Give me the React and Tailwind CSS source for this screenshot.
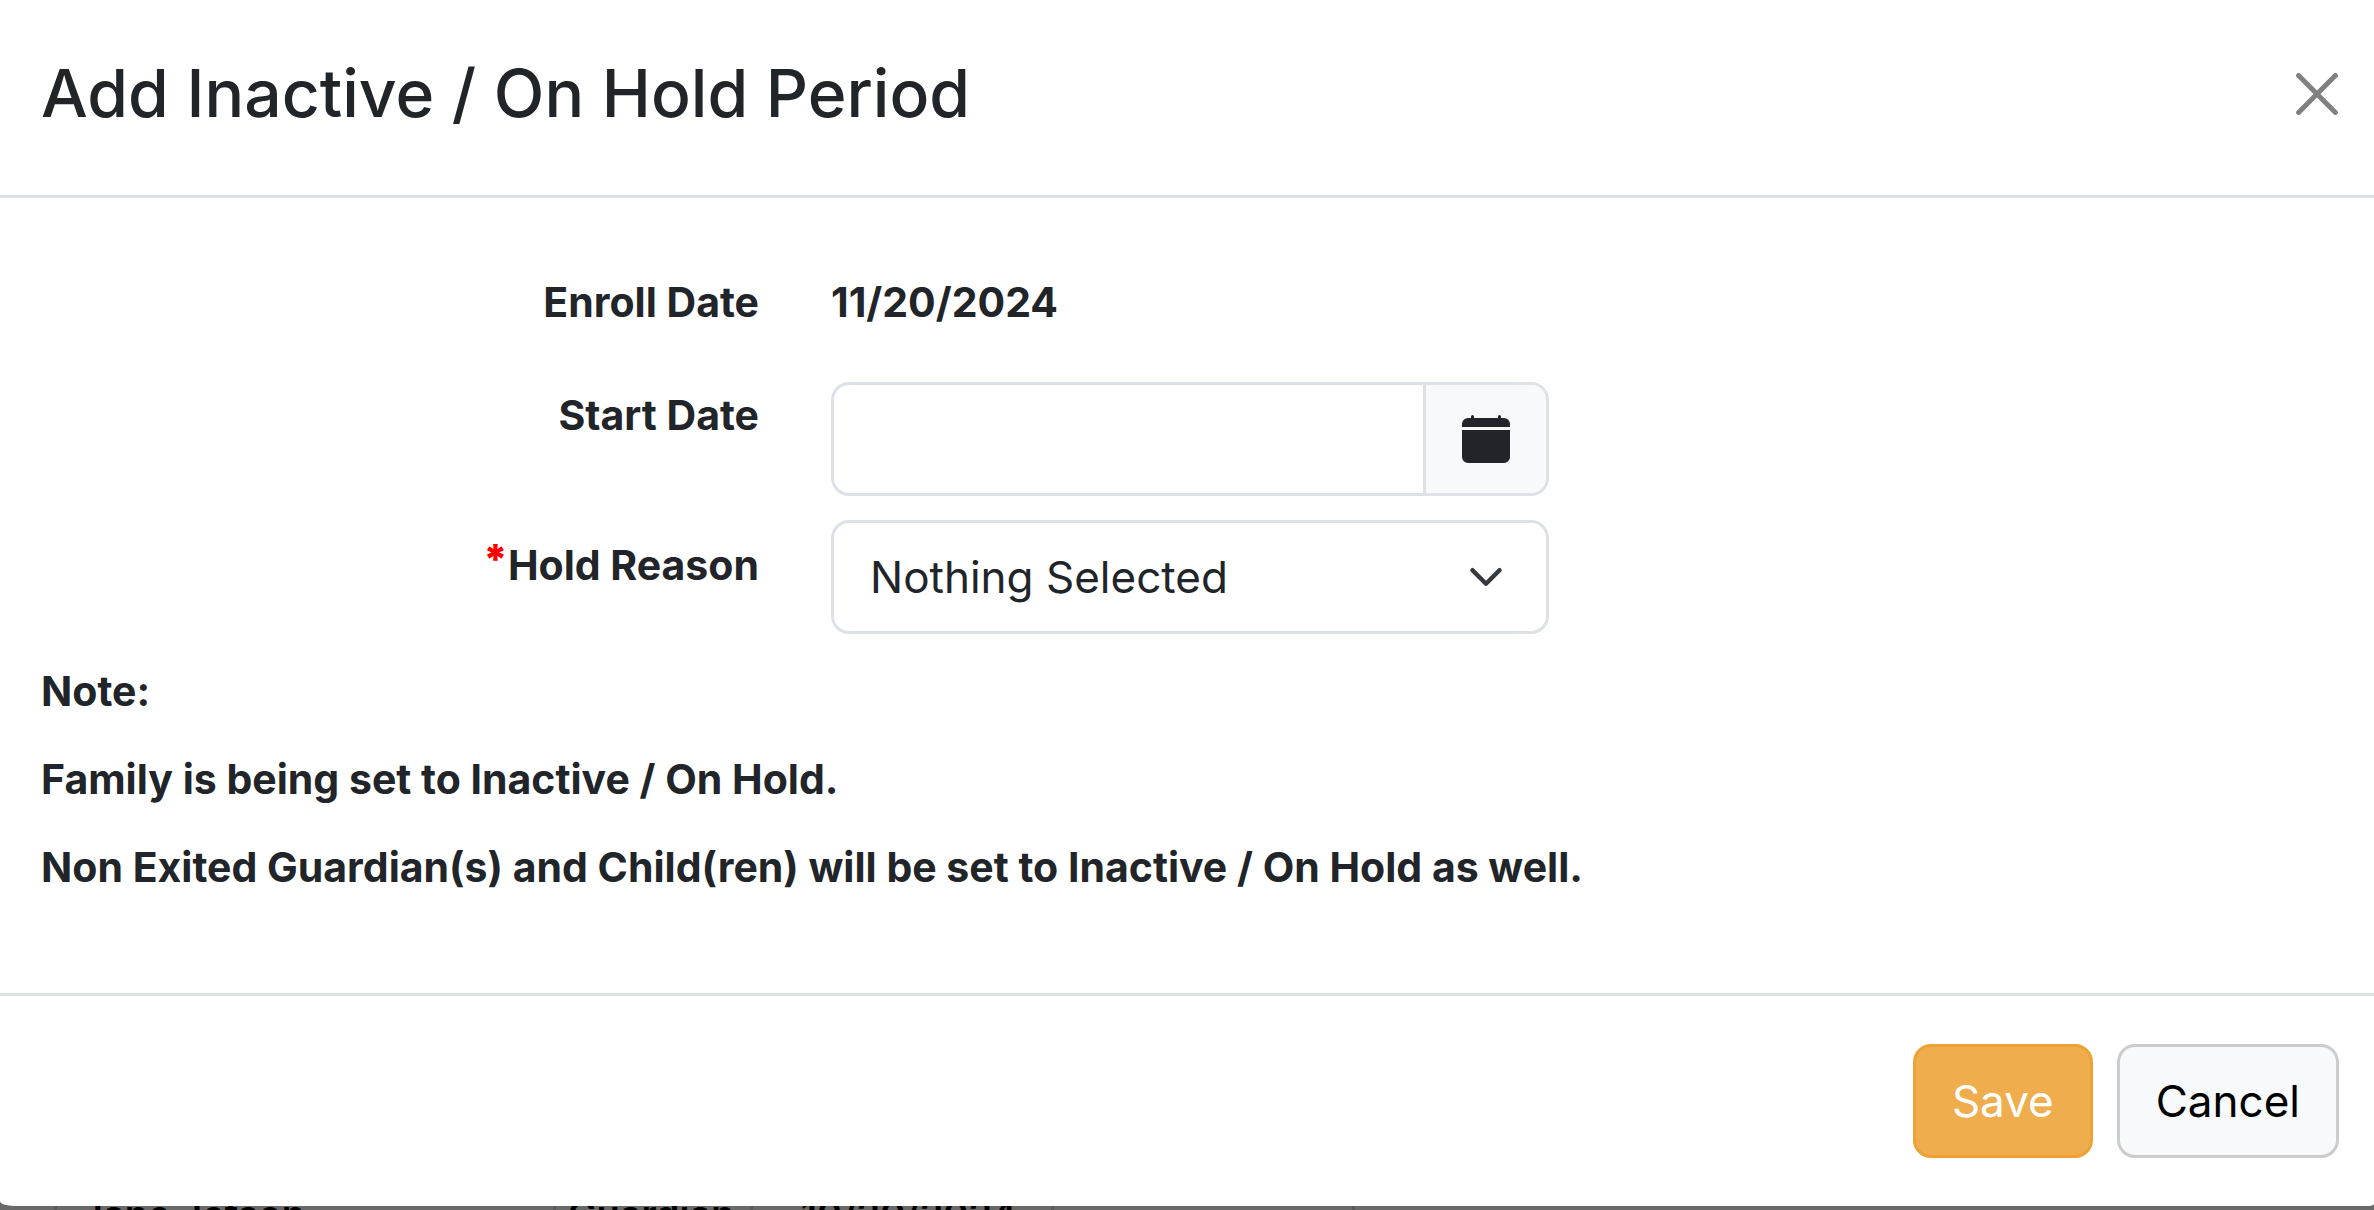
import React from "react";

const label = "font-bold text-[41px] leading-[66px]";
const cell = "border-l-[3px] border-[#5c5b5c] p-0 pt-7 align-top";

function BackgroundPage() {
  return (
    <div aria-hidden="true" className="fixed inset-x-0 bottom-0 h-12 overflow-hidden bg-[#6a696a] pl-[54px] text-[38px] leading-[48px] font-semibold text-black">
      <table className="table-fixed border-separate border-spacing-0">
        <tbody>
          <tr>
            <td className={cell + " w-[499px] pl-6"}>Jane Jetson</td>
            <td className={cell + " w-[197px] pl-3"}>Guardian</td>
            <td className={cell + " w-[301px] pl-12"}>10/20/2024</td>
            <td className={cell + " w-[304px] border-r-[3px]"} />
          </tr>
        </tbody>
      </table>
    </div>
  );
}

export default function App() {
  return (
    <div className="font-['Inter','Liberation_Sans',sans-serif] text-[#212529]">
      <BackgroundPage />
      <div role="dialog" aria-labelledby="dialog-title" className="relative rounded-br-[7px_2px] rounded-bl-[14px_5px] bg-white">
        <header className="flex items-center justify-between border-b-[3px] border-[#dee2e6] pt-11 pr-9 pb-[52px] pl-[41px]">
          <h1 id="dialog-title" className="text-[66px] leading-[99px] font-medium">Add Inactive / On Hold Period</h1>
          <button type="button" aria-label="Close" className="text-[#808080]">
            <svg className="size-[42px]" viewBox="0 0 42 42" fill="none" stroke="currentColor" strokeWidth="5" strokeLinecap="round">
              <path d="M2.6 2.6 39.4 39.4M39.4 2.6 2.6 39.4" />
            </svg>
          </button>
        </header>

        <form id="hold-form" className="pt-[71px] pr-[35px] pb-[93px] pl-[41px]">
          <div className="grid grid-cols-12 gap-x-[72px]">
            <div className={label + " col-span-4 text-right"}>Enroll Date</div>
            <div className={label + " col-span-8"}>11/20/2024</div>
          </div>

          <div className="mt-[47px] grid grid-cols-12 gap-x-[72px]">
            <label htmlFor="start-date" className={label + " col-span-4 text-right"}>Start Date</label>
            <div className="col-span-4 flex h-[114px] overflow-hidden rounded-[18px] border-[3px] border-[#dee2e6]">
              <input id="start-date" type="text" className="min-w-0 flex-1 px-9 text-[44px] outline-none" />
              <button type="button" aria-label="Choose date" className="flex w-[123px] items-center justify-center border-l-[3px] border-[#dee2e6] bg-[#f8f9fa]">
                <svg className="size-12" viewBox="0 0 16 16" fill="currentColor">
                  <path d="M3.5 0a.5.5 0 0 1 .5.5V1h8V.5a.5.5 0 0 1 1 0V1h1a2 2 0 0 1 2 2v1H0V3a2 2 0 0 1 2-2h1V.5a.5.5 0 0 1 .5-.5M16 14V5H0v9a2 2 0 0 0 2 2h12a2 2 0 0 0 2-2" />
                </svg>
              </button>
            </div>
          </div>

          <div className="mt-6 grid grid-cols-12 gap-x-[72px]">
            <label htmlFor="hold-reason" className={label + " col-span-4 pt-3 text-right"}>
              <span className="align-[6px] leading-none font-black text-[#ff0000]">*</span>Hold Reason
            </label>
            <div className="relative col-span-4">
              <select id="hold-reason" className="block h-[114px] w-full appearance-none rounded-[18px] border-[3px] border-[#dee2e6] bg-white px-9 text-[44px]">
                <option>Nothing Selected</option>
              </select>
              <svg className="pointer-events-none absolute top-[39px] right-[45px] size-9" viewBox="0 0 16 16" fill="none" stroke="#343a40" strokeWidth="2" strokeLinecap="round" strokeLinejoin="round">
                <path d="m2 5 6 6 6-6" />
              </svg>
            </div>
          </div>

          <div className="mt-6 flex flex-col gap-[22px]">
            <p className={label}>Note:</p>
            <p className={label}>Family is being set to Inactive / On Hold.</p>
            <p className={label}>Non Exited Guardian(s) and Child(ren) will be set to Inactive / On Hold as well.</p>
          </div>
        </form>

        <footer className="flex justify-end gap-6 border-t-[3px] border-[#dee2e6] pt-12 pr-[35px] pb-12 text-[44px] leading-[72px]">
          <button type="submit" form="hold-form" className="rounded-[18px] border-[3px] border-[#eea236] bg-[#f0ad4e] px-9 py-[18px] text-white">Save</button>
          <button type="button" className="rounded-[18px] border-[3px] border-[#cccccc] bg-[#f8f9fa] px-9 py-[18px] text-black">Cancel</button>
        </footer>
      </div>
    </div>
  );
}
